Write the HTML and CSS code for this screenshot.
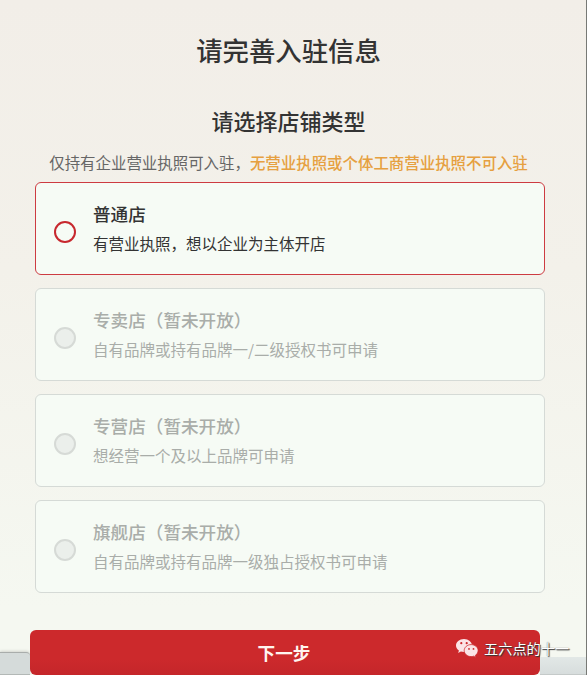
FILE: index.html
```html
<!DOCTYPE html>
<html lang="zh-CN">

<head>
    <meta charset="UTF-8">
    <meta name="viewport" content="width=device-width, initial-scale=1.0">
    <title>请完善入驻信息</title>
    <link rel="stylesheet" href="styles.css">
</head>

<body>
    <div class="page">
        <h1>请完善入驻信息</h1>
        <h2>请选择店铺类型</h2>
        <p class="tip">仅持有企业营业执照可入驻，<span class="warn">无营业执照或个体工商营业执照不可入驻</span></p>

        <div class="shop-list">
            <div class="shop active">
                <span class="radio"></span>
                <div class="shop-info">
                    <h3>普通店</h3>
                    <p>有营业执照，想以企业为主体开店</p>
                </div>
            </div>
            <div class="shop">
                <span class="radio"></span>
                <div class="shop-info">
                    <h3>专卖店（暂未开放）</h3>
                    <p>自有品牌或持有品牌一/二级授权书可申请</p>
                </div>
            </div>
            <div class="shop">
                <span class="radio"></span>
                <div class="shop-info">
                    <h3>专营店（暂未开放）</h3>
                    <p>想经营一个及以上品牌可申请</p>
                </div>
            </div>
            <div class="shop">
                <span class="radio"></span>
                <div class="shop-info">
                    <h3>旗舰店（暂未开放）</h3>
                    <p>自有品牌或持有品牌一级独占授权书可申请</p>
                </div>
            </div>
        </div>

        <div class="footer">
            <div class="bar-left"></div>
            <button class="next">下一步</button>
            <div class="bar-right"></div>
        </div>

        <div class="watermark">
            <svg width="24" height="21" viewBox="0 0 24 21">
                <path fill="#fbe4e6" d="M9 1C4.300 1 1 4 1 7.600c0 2.100 1.100 3.800 2.900 5L3.200 15l2.700-1.400c1 .3 2 .4 3.100.4 4.500 0 8-2.800 8-6.400S13.500 1 9 1z" />
                <path fill="#fbe4e6" stroke="#cb282c" stroke-width=".8" d="M16.200 6.600c-4 0-7 2.700-7 6s3 6 7 6c.8 0 1.700-.1 2.400-.4l2.300 1.300-.6-2.100c1.700-1.100 2.800-2.800 2.800-4.800 0-3.300-3-6-6.900-6z" />
                <g fill="#cb282c">
                    <circle cx="6.300" cy="5.200" r="1.100" />
                    <circle cx="11.700" cy="5.200" r="1.100" />
                    <circle cx="14" cy="10.900" r=".9" />
                    <circle cx="18.500" cy="10.900" r=".9" />
                </g>
            </svg>
            <span>五六点的十一</span>
        </div>
    </div>
</body>

</html>
```

FILE: styles.css
```css
* {
    box-sizing: border-box;
}

body {
    margin: 0;
    font-family: "Noto Sans CJK SC", sans-serif;
    color: #333;
}

h1, h2, h3, p {
    margin: 0;
    font-weight: 500;
}

.page {
    position: relative;
    display: flex;
    flex-direction: column;
    height: 675px;
    overflow: hidden;
    border-right: 1px solid #777975;
    background: linear-gradient(#f2eee8, #f3f1ea 40%, #f5f8f1 90%);
}

h1 {
    margin-top: 30px;
    padding-right: 9px;
    font-size: 26.4px;
    line-height: 40px;
    text-align: center;
}

h2 {
    margin-top: 34px;
    padding-right: 9px;
    font-size: 22px;
    line-height: 32px;
    text-align: center;
}

.tip {
    margin-top: 14px;
    padding-right: 9px;
    font-size: 15.45px;
    font-weight: 400;
    line-height: 24px;
    text-align: center;
    white-space: nowrap;
    color: #666;
}

.warn {
    color: #e6a040;
    font-weight: 500;
}

.shop-list {
    display: flex;
    flex-direction: column;
    gap: 13px;
    margin: 8px 41px 0 35px;
}

.shop {
    display: flex;
    align-items: flex-start;
    height: 93px;
    padding: 17px 18px;
    border: 1px solid #d5dad6;
    border-radius: 6px;
    background: #f6fbf5;
    color: #a9ada9;
}

.shop.active {
    border-color: #cd3b41;
    color: #333;
}

.radio {
    width: 22px;
    height: 22px;
    margin-top: 21px;
    border: 2px solid #d6dad6;
    border-radius: 50%;
    background: #ebefeb;
}

.active .radio {
    border-color: #c7282e;
    background: transparent;
}

.shop-info {
    margin-left: 17px;
}

.shop-info h3 {
    font-size: 17.6px;
    line-height: 28px;
}

.shop-info p {
    margin-top: 3px;
    font-size: 15.5px;
    font-weight: 400;
    line-height: 24px;
}

.footer {
    display: flex;
    align-items: flex-end;
    margin-top: 37px;
}

.bar-left {
    width: 30px;
    height: 23px;
    border-top: 1px solid #a9adab;
    border-bottom: 1px solid #b3b8b6;
    border-top-right-radius: 4px;
    background: #d5dbda;
    box-shadow: 0 -1px 3px rgba(0, 0, 0, 0.15);
}

.next {
    width: 510px;
    height: 45px;
    padding: 0 2px 0 0;
    border: none;
    border-radius: 6px;
    background: linear-gradient(#cc292c 65%, #c4262a);
    color: #fff5f0;
    font-family: inherit;
    font-size: 17.6px;
    font-weight: 700;
    line-height: 45px;
}

.bar-right {
    flex: 1;
    height: 18px;
    border-bottom: 1px solid #c5cac9;
    background: linear-gradient(#e2e8e6, #d7dddd);
}

.watermark {
    position: absolute;
    left: 455px;
    top: 638px;
    display: flex;
    align-items: center;
    gap: 5px;
    color: #fff;
    font-size: 14.2px;
    line-height: 22px;
    white-space: nowrap;
    text-shadow: 1px 1px 1px #333, 0 0 1px #444;
}

.watermark span {
    margin-top: -2px;
}
```
